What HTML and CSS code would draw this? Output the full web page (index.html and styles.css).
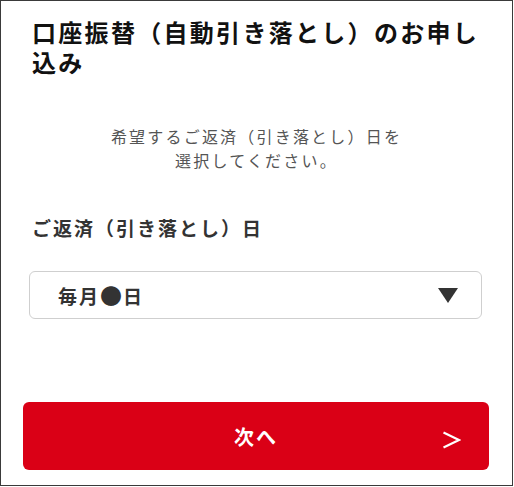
FILE: index.html
```html
<!DOCTYPE html>
<html lang="ja">
<head>
<meta charset="utf-8">
<link rel="stylesheet" href="styles.css">
</head>
<body>
<div class="frame">
  <h1 class="title">口座振替（自動引き落とし）のお申し込み</h1>
  <p class="lead">希望するご返済（引き落とし）日を<br>選択してください。</p>
  <div class="field">
    <div class="label">ご返済（引き落とし）日</div>
    <div class="select">
      <span class="select-value">毎月<span class="dot">●</span>日</span>
      <svg class="select-arrow" width="20" height="15" viewBox="0 0 20 15"><polygon points="0,0 20,0 10,15" fill="#333"/></svg>
    </div>
  </div>
  <button class="next" type="button">
    <span class="next-text">次へ</span>
    <svg class="next-arrow" width="19" height="18" viewBox="0 0 19 18"><polyline points="1.5,1.5 17,9 1.5,16.5" fill="none" stroke="#fff" stroke-width="2.2" stroke-linejoin="miter"/></svg>
  </button>
</div>
</body>
</html>
```
FILE: styles.css
```css
html, body {
  margin: 0;
  padding: 0;
  background: #fff;
}
body {
  font-family: "Noto Sans CJK JP", "Noto Sans", sans-serif;
}
.frame {
  box-sizing: border-box;
  width: 513px;
  height: 486px;
  border: 1px solid #3a3a3a;
  padding-top: 16px;
  display: flex;
  flex-direction: column;
}
.title {
  margin: 0;
  padding: 0 30px 0 31px;
  font-size: 24px;
  line-height: 30px;
  font-weight: 700;
  letter-spacing: 2.3px;
  color: #111;
}
.lead {
  margin: 47px 0 0;
  text-align: center;
  font-size: 16px;
  line-height: 24px;
  letter-spacing: 2.2px;
  color: #555;
}
.field {
  margin: 42px 0 0 28px;
  width: 453px;
}
.label {
  padding-left: 3px;
  font-size: 19px;
  line-height: 28px;
  font-weight: 700;
  letter-spacing: 2px;
  color: #333;
}
.select {
  box-sizing: border-box;
  margin-top: 29px;
  height: 48px;
  border: 1.5px solid #cfcfcf;
  border-radius: 6px;
  display: flex;
  align-items: center;
  justify-content: space-between;
  padding: 0 23px 0 28px;
}
.select-value {
  font-size: 19px;
  font-weight: 700;
  letter-spacing: 2px;
  color: #333;
}
.dot {
  font-size: 22px;
  line-height: 1;
  letter-spacing: 0;
  margin-right: 1px;
}
.select-arrow {
  display: block;
}
.next {
  box-sizing: border-box;
  margin: 83px 0 0 22px;
  width: 466px;
  height: 68px;
  border: none;
  border-radius: 6px;
  background: #da0016;
  position: relative;
  display: flex;
  align-items: center;
  justify-content: center;
  padding: 0;
  font-family: inherit;
}
.next-text {
  font-size: 20px;
  font-weight: 700;
  letter-spacing: 2px;
  color: #fff;
}
.next-arrow {
  position: absolute;
  right: 28px;
  top: 29px;
}
```
